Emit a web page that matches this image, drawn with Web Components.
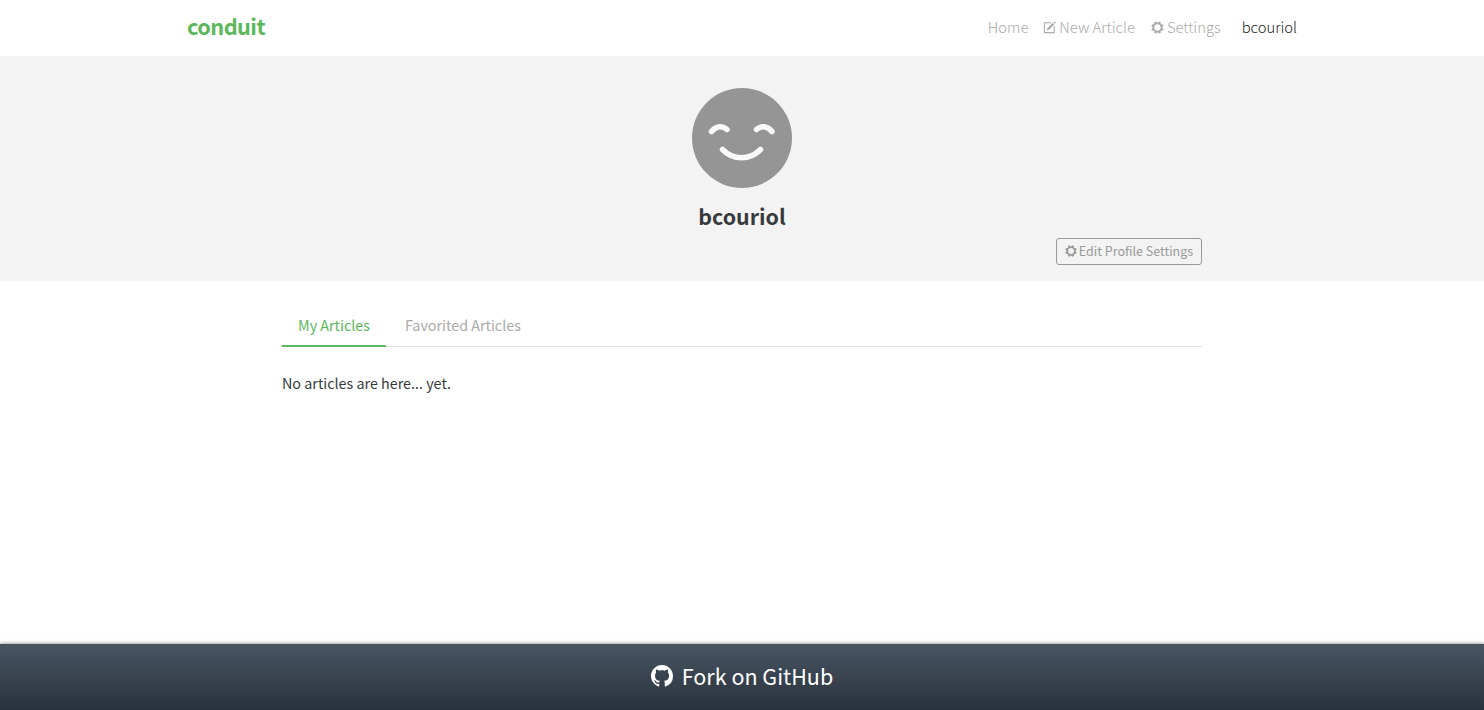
<!DOCTYPE html>
<html lang="en">
<head>
<meta charset="utf-8">
<title>Conduit</title>
<style>
body{margin:0;background:#fff;color:#373a3c;font-family:"Source Sans Pro","Noto Sans CJK SC",sans-serif;font-size:14.33px;line-height:24px}
</style>
</head>
<body>
<conduit-app></conduit-app>
<script>
function define(name, html) {
  customElements.define(name, class extends HTMLElement {
    constructor() {
      super();
      this.attachShadow({mode: 'open'}).innerHTML = html;
    }
  });
}

const tooth = i => `<path d="M6.2 3.4 6.7.4h2.600l.5 3z" transform="rotate(${i * 45 + 22.5} 8 8)"/>`;
const shapes = {
  gear: [0, 1, 2, 3, 4, 5, 6, 7].map(tooth).join('') + '<circle cx="8" cy="8" r="5" fill="none" stroke="currentColor" stroke-width="2.2"/>',
  compose: '<path d="M10.2 2.2H1.7v12.1h12.1V6.2" fill="none" stroke="currentColor" stroke-width="1.3"/><path d="M14 .5 15.7 2.2 14.3 3.6 12.6 1.9zM11.9 2.5l1.9 1.9-6.4 6.4-2.9.9.9-2.9z"/>',
  github: '<path d="M8 0C3.58 0 0 3.58 0 8c0 3.54 2.29 6.53 5.47 7.59.4.07.55-.17.55-.38 0-.19-.01-.82-.01-1.49-2.01.37-2.53-.49-2.69-.94-.09-.23-.48-.94-.82-1.13-.28-.15-.68-.52-.01-.53.63-.01 1.08.58 1.23.82.72 1.21 1.87.87 2.33.66.07-.52.28-.87.51-1.07-1.78-.2-3.64-.89-3.64-3.95 0-.87.31-1.59.82-2.15-.08-.2-.36-1.02.08-2.12 0 0 .67-.21 2.2.82.64-.18 1.32-.27 2-.27s1.36.09 2 .27c1.53-1.04 2.2-.82 2.2-.82.44 1.1.16 1.92.08 2.12.51.56.82 1.27.82 2.15 0 3.07-1.87 3.75-3.65 3.95.29.25.54.73.54 1.48 0 1.07-.01 1.93-.01 2.2 0 .21.15.46.55.38A8.01 8.01 0 0 0 16 8c0-4.42-3.58-8-8-8z"/>'
};
customElements.define('ui-icon', class extends HTMLElement {
  connectedCallback() {
    if (this.shadowRoot) return;
    this.attachShadow({mode: 'open'}).innerHTML = `<style>:host{display:inline-block;flex:none;width:13px;height:13px}svg{display:block;width:100%;height:100%;fill:currentColor}</style><svg viewBox="0 0 16 16">${shapes[this.getAttribute('name')]}</svg>`;
  }
});

define('nav-bar', `<style>
:host{display:flex;box-sizing:border-box;height:56px;padding:0 187px;justify-content:space-between;align-items:center;background:#fff}
.brand{font-size:21.8px;letter-spacing:-.6px;font-weight:700;color:#5cb85c;line-height:30px;padding-bottom:4px}
nav{display:flex;font-size:14.8px;font-weight:300;color:#aaa;padding-bottom:2px}
span{display:flex;align-items:center;white-space:nowrap;gap:3px}
span+span{margin-left:15px}
span:nth-child(3){margin-left:16px}
span.me{margin-left:21px;color:#222}
</style><div class="brand">conduit</div>
<nav><span>Home</span><span><ui-icon name="compose"></ui-icon>New Article</span><span><ui-icon name="gear"></ui-icon>Settings</span><span class="me">bcouriol</span></nav>`);

define('user-avatar', `<style>:host{display:block;width:100px;height:100px}svg{display:block}</style>
<svg width="100" height="100" viewBox="0 0 100 100"><circle cx="50" cy="50" r="50" fill="#959595"/><g fill="none" stroke="#fafafa" stroke-width="5.5" stroke-linecap="round"><path d="M19.5 43.5C24 38 30 37 35 41.5M64.5 41.5C69.500 37 75.500 38 80 43.5M30.5 61.5C41 72.5 58 72.5 68.5 61.5"/></g></svg>`);

define('outline-button', `<style>:host{display:flex;box-sizing:border-box;width:146px;height:27px;border:1px solid #999;border-radius:3px;padding-bottom:2px;align-items:center;justify-content:center;gap:2px;color:#999;font-size:12.5px;line-height:20px;white-space:nowrap}
ui-icon{width:12px;height:12px}</style><ui-icon name="gear"></ui-icon><slot></slot>`);

define('profile-banner', `<style>
:host{display:flex;flex-direction:column;align-items:center;box-sizing:border-box;height:225px;padding:32px 282px 16px;background:#f3f3f3}
h4{margin:15px 0 9px;font-size:21.4px;line-height:26px;font-weight:700}
outline-button{align-self:flex-end}
</style><user-avatar></user-avatar><h4><slot></slot></h4><outline-button>Edit Profile Settings</outline-button>`);

define('article-tabs', `<style>
:host{display:flex;box-sizing:border-box;height:42px;border-bottom:1px solid #e3e3e3;color:#aaa}
div{box-sizing:border-box;height:42px;padding:8px 16px;white-space:nowrap}
.on{width:104px;color:#5cb85c;border-bottom:2px solid #5cb85c;margin-right:3px}
</style><div class="on">My Articles</div><div>Favorited Articles</div>`);

define('fork-footer', `<style>
:host{display:flex;box-sizing:border-box;height:66px;padding-bottom:2px;margin-top:auto;align-items:center;justify-content:center;gap:9px;background:linear-gradient(#485563,#29323c);color:#fff;font-size:21.5px;line-height:30px;font-weight:400;box-shadow:0 0 4px rgba(0,0,0,.55);white-space:nowrap}
ui-icon{width:22px;height:22px}
</style><ui-icon name="github"></ui-icon><slot></slot>`);

define('conduit-app', `<style>
:host{display:flex;flex-direction:column;height:710px;overflow:hidden}
main{padding:24px 282px 0}
p{margin:24px 0 0}
</style><nav-bar></nav-bar><profile-banner>bcouriol</profile-banner><main><article-tabs></article-tabs><p>No articles are here... yet.</p></main><fork-footer><span>Fork on GitHub</span></fork-footer>`);
</script>
</body>
</html>
